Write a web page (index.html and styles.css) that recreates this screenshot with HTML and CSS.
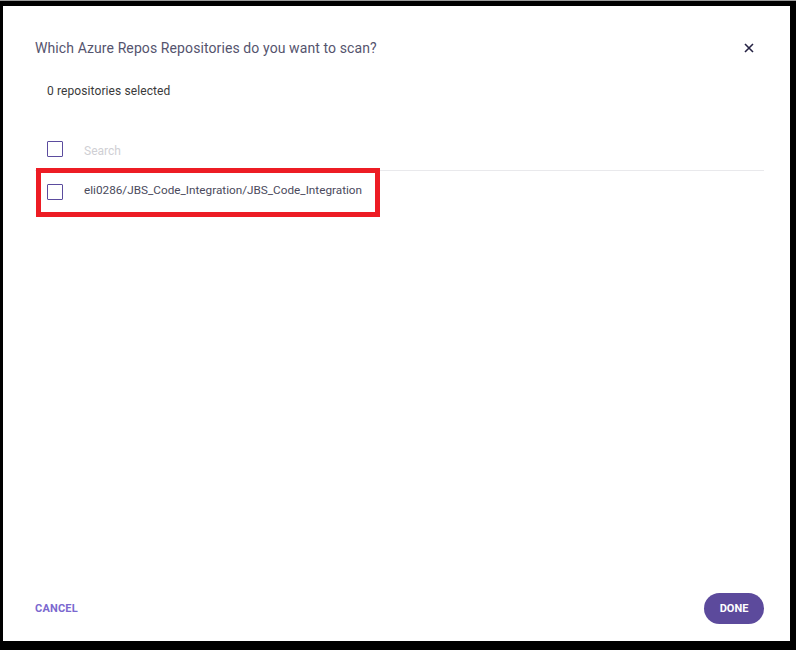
FILE: index.html
```html
<!DOCTYPE html>
<html lang="en">
<head>
    <meta charset="UTF-8">
    <meta name="viewport" content="width=device-width, initial-scale=1.0">
    <title>Select Repositories</title>
    <link rel="stylesheet" href="styles.css">
</head>
<body>

    <div class="dialog">
        <!-- Header -->
        <div class="dialog-header">
            <h2 class="dialog-title">Which Azure Repos Repositories do you want to scan?</h2>
            <button class="close-button" aria-label="Close">
                <svg width="10" height="10" viewBox="0 0 10 10">
                    <path d="M1 1 L9 9 M9 1 L1 9" stroke="#262344" stroke-width="1.6" fill="none"/>
                </svg>
            </button>
        </div>

        <p class="selected-count">0 repositories selected</p>

        <!-- Repo list -->
        <div class="repo-list">
            <label class="repo-row search-row">
                <input type="checkbox" class="box">
                <input type="text" class="search-input" placeholder="Search">
            </label>
            <div class="highlighted">
                <label class="repo-row">
                    <input type="checkbox" class="box">
                    <span class="repo-name">eli0286/JBS_Code_Integration/JBS_Code_Integration</span>
                </label>
                <div class="highlight-box"></div>
            </div>
        </div>

        <!-- Footer -->
        <div class="dialog-footer">
            <button class="cancel-button">CANCEL</button>
            <button class="done-button">DONE</button>
        </div>
    </div>

</body>
</html>
```

FILE: styles.css
```css
/* Reset default styles */
* {
    box-sizing: border-box;
    margin: 0;
    padding: 0;
}

html {
    background: #000;
}

body {
    font-family: Roboto, 'Liberation Sans', sans-serif;
    height: 650px;
    padding: 5px 6px 9px 3px;
    border-top: 1px solid #9a9a9a;
    background: #000;
}

/* Dialog */
.dialog {
    background: #fff;
    height: 100%;
    display: flex;
    flex-direction: column;
    padding: 0 26px 0 32px;
}

.dialog-header {
    display: flex;
    justify-content: space-between;
    align-items: center;
    padding-top: 32px;
}

.dialog-title {
    font-size: 14px;
    font-weight: 400;
    line-height: 20px;
    letter-spacing: 0.1px;
    color: #55546e;
}

.close-button {
    background: none;
    border: none;
    width: 10px;
    height: 10px;
    margin-right: 10px;
    display: flex;
    cursor: pointer;
}

.selected-count {
    font-size: 12px;
    line-height: 16px;
    letter-spacing: 0.1px;
    color: #3a3a3a;
    margin-top: 25px;
    padding-left: 12px;
}

/* List */
.repo-list {
    margin-top: 34px;
}

.repo-row {
    display: flex;
    align-items: center;
    height: 32px;
    padding-left: 12px;
}

.search-row {
    border-bottom: 1px solid #e9e9ec;
    height: 38px;
    padding-bottom: 5px;
}

.box {
    appearance: none;
    width: 16px;
    height: 16px;
    border: 1.5px solid #5b4c9e;
    border-radius: 1px;
    background: #fff;
    margin-right: 21px;
    flex-shrink: 0;
}

.search-input {
    border: none;
    outline: none;
    font-family: inherit;
    font-size: 12px;
    color: #333;
    width: 300px;
    margin-top: 3px;
}

.search-input::placeholder {
    color: #cfcfd4;
}

.highlighted {
    position: relative;
    height: 46px;
    padding-top: 5px;
}

.repo-name {
    font-size: 11.75px;
    color: #4a4a5c;
    margin-top: -4px;
}

/* Red annotation frame */
.highlight-box {
    position: absolute;
    left: 1px;
    top: -3px;
    width: 344px;
    height: 49px;
    border: 5px solid #ed1c24;
}

/* Footer */
.dialog-footer {
    margin-top: auto;
    display: flex;
    justify-content: space-between;
    align-items: center;
    padding-bottom: 17px;
}

.cancel-button {
    background: none;
    border: none;
    font-family: inherit;
    font-size: 11px;
    font-weight: 700;
    letter-spacing: 0.2px;
    color: #7b68cf;
    cursor: pointer;
}

.done-button {
    background: #5c4a9c;
    color: #fff;
    border: none;
    width: 60px;
    height: 31px;
    border-radius: 16px;
    font-family: inherit;
    font-size: 11px;
    font-weight: 700;
    cursor: pointer;
}
```
